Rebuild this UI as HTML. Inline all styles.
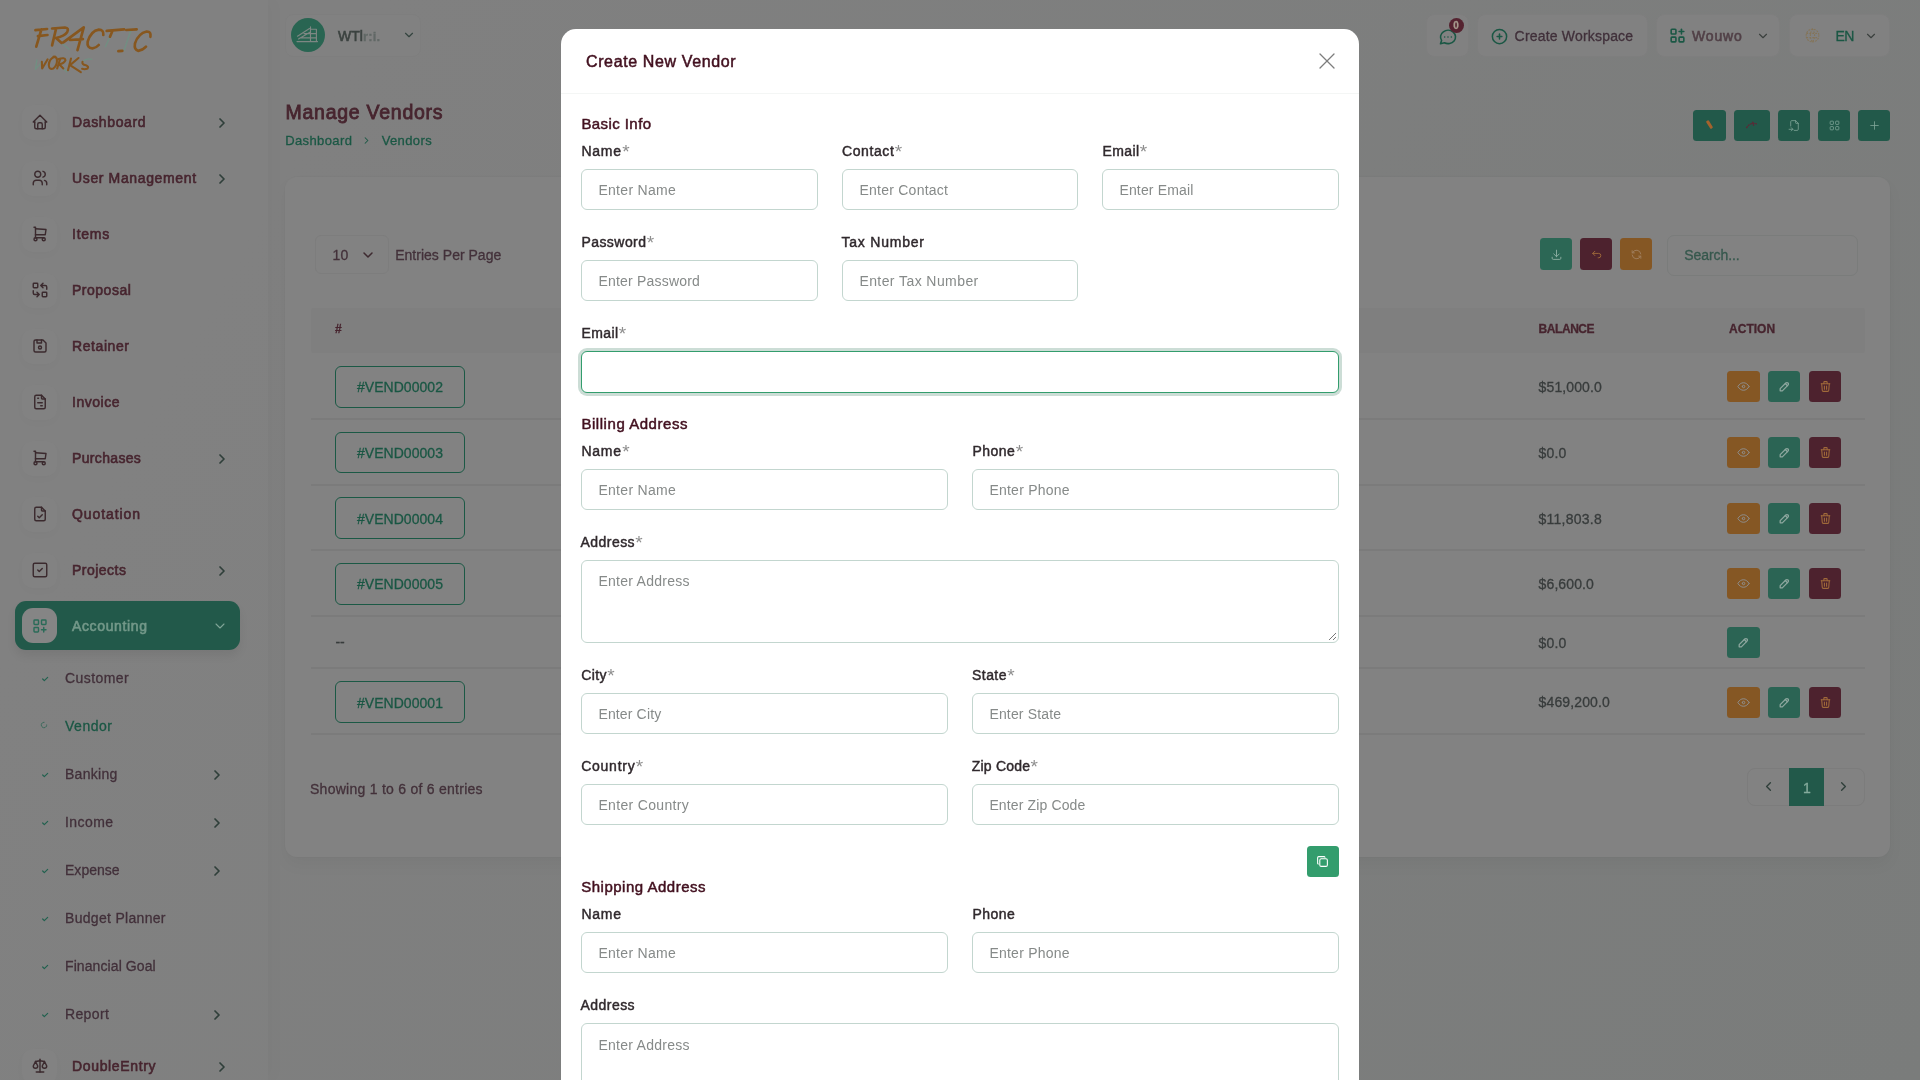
<!DOCTYPE html>
<html lang="en"><head><meta charset="utf-8"><title>Manage Vendors</title>
<style>
*{box-sizing:border-box;margin:0;padding:0}
html,body{width:1920px;height:1080px;overflow:hidden}
body{background:linear-gradient(120deg,#808080 0%,#808080 15%,#7a7c7b 100%);font-family:"Liberation Sans", sans-serif;position:relative}
#page,#modal{position:absolute;left:0;top:0;width:1920px;height:1080px;overflow:hidden;will-change:transform}
.t{position:absolute;white-space:pre;line-height:1;display:block}
.b{position:absolute}
.ic{position:absolute;display:block;overflow:visible}
.lab{position:absolute;white-space:pre;line-height:1;font-size:14px;display:block}
.tl{display:inline}
.star{position:absolute;left:100%;top:-2.1px;font-size:19px;line-height:1;margin-left:.3px}
</style></head>
<body>
<div id="page">
<div class="b" style="left:0px;top:0px;width:268px;height:1080px;background:rgba(255,255,255,.012);box-shadow:6px 0 14px rgba(0,0,0,.018);"></div>
<svg class="ic" style="left:20px;top:10px" width="160" height="80" viewBox="0 0 1920 960" fill="none" stroke="#87571f" stroke-linecap="round" stroke-linejoin="round"><g stroke-width="16" stroke="#6c9482" opacity=".75"><path d="M500 395 L590 470"/><path d="M1080 320 L1025 440"/><path d="M1330 246 L1250 482"/><path d="M202 600 L186 712 L262 622"/><path d="M520 702 L560 742"/><path d="M860 592 Q800 572 750 622"/></g><g stroke-width="32"><path d="M185 242 L325 228 M257 232 L195 440 M215 314 L330 300"/><path d="M432 228 L385 425 M385 222 L540 210 Q592 216 566 266 Q540 312 432 336 L500 395"/><path d="M520 388 L765 208 L690 482 M600 360 L755 350"/><path d="M1000 300 Q1006 236 946 236 Q852 250 812 380 Q800 456 870 460 Q915 455 945 420"/><path d="M1040 250 L1250 232 M1110 250 L1080 320"/><path d="M1275 240 L1400 232 M1180 494 L1228 490"/><path d="M1565 322 Q1576 256 1520 258 Q1420 280 1380 400 Q1366 480 1420 490 Q1470 485 1512 440"/></g><g stroke-width="25"><path d="M262 622 L266 702 L332 592"/><path d="M420 560 Q350 580 345 660 Q350 722 400 702 Q452 660 442 592 Q436 556 400 560"/><path d="M482 586 L446 702 M456 592 Q540 560 546 602 Q530 642 470 652 L520 702"/><path d="M612 582 L576 722 M702 576 L600 662 L730 746"/><path d="M750 622 Q740 652 790 662 Q832 682 810 702 Q780 716 745 706"/></g></svg>
<div class="b" style="left:22px;top:104.5px;width:35px;height:35px;background:#828282;border-radius:11px;box-shadow:0 3px 8px rgba(0,0,0,.02);"></div>
<svg class="ic" style="left:31px;top:113px;" width="18" height="18" viewBox="0 0 24 24" fill="none" stroke="#3b2a2e" stroke-width="1.9" stroke-linecap="round" stroke-linejoin="round"><path d="M5 12l-2 0l9 -9l9 9l-2 0"/><path d="M5 12v7a2 2 0 0 0 2 2h10a2 2 0 0 0 2 -2v-7"/><path d="M9 21v-6a2 2 0 0 1 2 -2h2a2 2 0 0 1 2 2v6"/></svg>
<span class="t sb" style="left:72.00px;top:115.15px;font-size:14px;font-weight:400;color:#47252f;-webkit-text-stroke:0.60px #47252f;letter-spacing:0.637px;">Dashboard</span>
<svg class="ic" style="left:214px;top:114.5px;" width="16" height="16" viewBox="0 0 24 24" fill="none" stroke="#2f3f3a" stroke-width="2.6" stroke-linecap="round" stroke-linejoin="round"><path d="M9 6l6 6l-6 6"/></svg>
<div class="b" style="left:22px;top:160.5px;width:35px;height:35px;background:#828282;border-radius:11px;box-shadow:0 3px 8px rgba(0,0,0,.02);"></div>
<svg class="ic" style="left:31px;top:169px;" width="18" height="18" viewBox="0 0 24 24" fill="none" stroke="#3b2a2e" stroke-width="1.9" stroke-linecap="round" stroke-linejoin="round"><path d="M9 7m-4 0a4 4 0 1 0 8 0a4 4 0 1 0 -8 0"/><path d="M3 21v-2a4 4 0 0 1 4 -4h4a4 4 0 0 1 4 4v2"/><path d="M16 3.13a4 4 0 0 1 0 7.75"/><path d="M21 21v-2a4 4 0 0 0 -3 -3.85"/></svg>
<span class="t sb" style="left:72.00px;top:171.15px;font-size:14px;font-weight:400;color:#47252f;-webkit-text-stroke:0.60px #47252f;letter-spacing:0.634px;">User Management</span>
<svg class="ic" style="left:214px;top:170.5px;" width="16" height="16" viewBox="0 0 24 24" fill="none" stroke="#2f3f3a" stroke-width="2.6" stroke-linecap="round" stroke-linejoin="round"><path d="M9 6l6 6l-6 6"/></svg>
<div class="b" style="left:22px;top:216.5px;width:35px;height:35px;background:#828282;border-radius:11px;box-shadow:0 3px 8px rgba(0,0,0,.02);"></div>
<svg class="ic" style="left:31px;top:225px;" width="18" height="18" viewBox="0 0 24 24" fill="none" stroke="#3b2a2e" stroke-width="1.9" stroke-linecap="round" stroke-linejoin="round"><path d="M6 19m-2 0a2 2 0 1 0 4 0a2 2 0 1 0 -4 0"/><path d="M17 19m-2 0a2 2 0 1 0 4 0a2 2 0 1 0 -4 0"/><path d="M17 17h-11v-14h-2"/><path d="M6 5l14 1l-1 7h-13"/></svg>
<span class="t sb" style="left:72.00px;top:227.15px;font-size:14px;font-weight:400;color:#47252f;-webkit-text-stroke:0.60px #47252f;letter-spacing:0.766px;">Items</span>
<div class="b" style="left:22px;top:272.5px;width:35px;height:35px;background:#828282;border-radius:11px;box-shadow:0 3px 8px rgba(0,0,0,.02);"></div>
<svg class="ic" style="left:31px;top:281px;" width="18" height="18" viewBox="0 0 24 24" fill="none" stroke="#3b2a2e" stroke-width="1.9" stroke-linecap="round" stroke-linejoin="round"><path d="M3 3m0 1a1 1 0 0 1 1 -1h4a1 1 0 0 1 1 1v4a1 1 0 0 1 -1 1h-4a1 1 0 0 1 -1 -1z"/><path d="M15 15m0 1a1 1 0 0 1 1 -1h4a1 1 0 0 1 1 1v4a1 1 0 0 1 -1 1h-4a1 1 0 0 1 -1 -1z"/><path d="M21 11v-3a2 2 0 0 0 -2 -2h-6l3 3m0 -6l-3 3"/><path d="M3 13v3a2 2 0 0 0 2 2h6l-3 -3m0 6l3 -3"/></svg>
<span class="t sb" style="left:72.00px;top:283.15px;font-size:14px;font-weight:400;color:#47252f;-webkit-text-stroke:0.60px #47252f;letter-spacing:0.504px;">Proposal</span>
<div class="b" style="left:22px;top:328.5px;width:35px;height:35px;background:#828282;border-radius:11px;box-shadow:0 3px 8px rgba(0,0,0,.02);"></div>
<svg class="ic" style="left:31px;top:337px;" width="18" height="18" viewBox="0 0 24 24" fill="none" stroke="#3b2a2e" stroke-width="1.9" stroke-linecap="round" stroke-linejoin="round"><path d="M6 4h10l4 4v10a2 2 0 0 1 -2 2h-12a2 2 0 0 1 -2 -2v-12a2 2 0 0 1 2 -2"/><path d="M12 14m-2 0a2 2 0 1 0 4 0a2 2 0 1 0 -4 0"/><path d="M14 4l0 4l-6 0l0 -4"/></svg>
<span class="t sb" style="left:72.00px;top:339.15px;font-size:14px;font-weight:400;color:#47252f;-webkit-text-stroke:0.60px #47252f;letter-spacing:0.582px;">Retainer</span>
<div class="b" style="left:22px;top:384.5px;width:35px;height:35px;background:#828282;border-radius:11px;box-shadow:0 3px 8px rgba(0,0,0,.02);"></div>
<svg class="ic" style="left:31px;top:393px;" width="18" height="18" viewBox="0 0 24 24" fill="none" stroke="#3b2a2e" stroke-width="1.9" stroke-linecap="round" stroke-linejoin="round"><path d="M14 3v4a1 1 0 0 0 1 1h4"/><path d="M17 21h-10a2 2 0 0 1 -2 -2v-14a2 2 0 0 1 2 -2h7l5 5v11a2 2 0 0 1 -2 2z"/><path d="M9 7l1 0"/><path d="M9 13l6 0"/><path d="M13 17l2 0"/></svg>
<span class="t sb" style="left:72.00px;top:395.15px;font-size:14px;font-weight:400;color:#47252f;-webkit-text-stroke:0.60px #47252f;letter-spacing:0.538px;">Invoice</span>
<div class="b" style="left:22px;top:440.5px;width:35px;height:35px;background:#828282;border-radius:11px;box-shadow:0 3px 8px rgba(0,0,0,.02);"></div>
<svg class="ic" style="left:31px;top:449px;" width="18" height="18" viewBox="0 0 24 24" fill="none" stroke="#3b2a2e" stroke-width="1.9" stroke-linecap="round" stroke-linejoin="round"><path d="M6 19m-2 0a2 2 0 1 0 4 0a2 2 0 1 0 -4 0"/><path d="M17 19m-2 0a2 2 0 1 0 4 0a2 2 0 1 0 -4 0"/><path d="M17 17h-11v-14h-2"/><path d="M6 5l14 1l-1 7h-13"/></svg>
<span class="t sb" style="left:72.00px;top:451.15px;font-size:14px;font-weight:400;color:#47252f;-webkit-text-stroke:0.60px #47252f;letter-spacing:0.340px;">Purchases</span>
<svg class="ic" style="left:214px;top:450.5px;" width="16" height="16" viewBox="0 0 24 24" fill="none" stroke="#2f3f3a" stroke-width="2.6" stroke-linecap="round" stroke-linejoin="round"><path d="M9 6l6 6l-6 6"/></svg>
<div class="b" style="left:22px;top:496.5px;width:35px;height:35px;background:#828282;border-radius:11px;box-shadow:0 3px 8px rgba(0,0,0,.02);"></div>
<svg class="ic" style="left:31px;top:505px;" width="18" height="18" viewBox="0 0 24 24" fill="none" stroke="#3b2a2e" stroke-width="1.9" stroke-linecap="round" stroke-linejoin="round"><path d="M14 3v4a1 1 0 0 0 1 1h4"/><path d="M17 21h-10a2 2 0 0 1 -2 -2v-14a2 2 0 0 1 2 -2h7l5 5v11a2 2 0 0 1 -2 2z"/><path d="M9 15l2 2l4 -4"/></svg>
<span class="t sb" style="left:72.00px;top:507.15px;font-size:14px;font-weight:400;color:#47252f;-webkit-text-stroke:0.60px #47252f;letter-spacing:0.920px;">Quotation</span>
<div class="b" style="left:22px;top:552.5px;width:35px;height:35px;background:#828282;border-radius:11px;box-shadow:0 3px 8px rgba(0,0,0,.02);"></div>
<svg class="ic" style="left:31px;top:561px;" width="18" height="18" viewBox="0 0 24 24" fill="none" stroke="#3b2a2e" stroke-width="1.9" stroke-linecap="round" stroke-linejoin="round"><path d="M3 3m0 2a2 2 0 0 1 2 -2h14a2 2 0 0 1 2 2v14a2 2 0 0 1 -2 2h-14a2 2 0 0 1 -2 -2z"/><path d="M9 12l2 2l4 -4"/></svg>
<span class="t sb" style="left:72.00px;top:563.15px;font-size:14px;font-weight:400;color:#47252f;-webkit-text-stroke:0.60px #47252f;letter-spacing:0.486px;">Projects</span>
<svg class="ic" style="left:214px;top:562.5px;" width="16" height="16" viewBox="0 0 24 24" fill="none" stroke="#2f3f3a" stroke-width="2.6" stroke-linecap="round" stroke-linejoin="round"><path d="M9 6l6 6l-6 6"/></svg>
<div class="b" style="left:15px;top:601px;width:225px;height:49px;background:#22594a;border-radius:11px;box-shadow:0 6px 10px rgba(0,0,0,.07);"></div>
<div class="b" style="left:22px;top:608px;width:35px;height:35px;background:#858585;border-radius:11px;"></div>
<svg class="ic" style="left:31px;top:617px;" width="18" height="18" viewBox="0 0 24 24" fill="none" stroke="#2a6b58" stroke-width="1.9" stroke-linecap="round" stroke-linejoin="round"><path d="M4 4m0 1a1 1 0 0 1 1 -1h4a1 1 0 0 1 1 1v4a1 1 0 0 1 -1 1h-4a1 1 0 0 1 -1 -1z"/><path d="M14 4m0 1a1 1 0 0 1 1 -1h4a1 1 0 0 1 1 1v4a1 1 0 0 1 -1 1h-4a1 1 0 0 1 -1 -1z"/><path d="M4 14m0 1a1 1 0 0 1 1 -1h4a1 1 0 0 1 1 1v4a1 1 0 0 1 -1 1h-4a1 1 0 0 1 -1 -1z"/><path d="M14 17h6m-3 -3v6"/></svg>
<span class="t sb" style="left:72.00px;top:619.15px;font-size:14px;font-weight:400;color:#739889;-webkit-text-stroke:0.60px #739889;letter-spacing:0.631px;">Accounting</span>
<svg class="ic" style="left:212px;top:618px;" width="16" height="16" viewBox="0 0 24 24" fill="none" stroke="#7fa597" stroke-width="1.6" stroke-linecap="round" stroke-linejoin="round"><path d="M6 9l6 6l6 -6"/></svg>
<svg class="ic" style="left:40.5px;top:674.5px;" width="8" height="8" viewBox="0 0 24 24" fill="none" stroke="#22614f" stroke-width="3.6" stroke-linecap="round" stroke-linejoin="round"><path d="M5 12l5 5l10 -10"/></svg>
<span class="t sub" style="left:65.00px;top:671.15px;font-size:14px;font-weight:400;color:#42303a;-webkit-text-stroke:0.3px #42303a;letter-spacing:0.420px;">Customer</span>
<svg class="ic" style="left:40px;top:721px;" width="8" height="8" viewBox="0 0 24 24" fill="none" stroke="#2a6452" stroke-width="3" stroke-linecap="round" stroke-linejoin="round"><path d="M12 4a8 8 0 1 0 8 8" stroke-dasharray="3 3"/></svg>
<span class="t sub" style="left:65.00px;top:719.15px;font-size:14px;font-weight:400;color:#1a5744;-webkit-text-stroke:0.3px #1a5744;letter-spacing:0.523px;">Vendor</span>
<svg class="ic" style="left:40.5px;top:770.5px;" width="8" height="8" viewBox="0 0 24 24" fill="none" stroke="#22614f" stroke-width="3.6" stroke-linecap="round" stroke-linejoin="round"><path d="M5 12l5 5l10 -10"/></svg>
<span class="t sub" style="left:65.00px;top:767.15px;font-size:14px;font-weight:400;color:#42303a;-webkit-text-stroke:0.3px #42303a;letter-spacing:0.272px;">Banking</span>
<svg class="ic" style="left:209px;top:767px;" width="16" height="16" viewBox="0 0 24 24" fill="none" stroke="#2f3f3a" stroke-width="2.6" stroke-linecap="round" stroke-linejoin="round"><path d="M9 6l6 6l-6 6"/></svg>
<svg class="ic" style="left:40.5px;top:818.5px;" width="8" height="8" viewBox="0 0 24 24" fill="none" stroke="#22614f" stroke-width="3.6" stroke-linecap="round" stroke-linejoin="round"><path d="M5 12l5 5l10 -10"/></svg>
<span class="t sub" style="left:65.00px;top:815.15px;font-size:14px;font-weight:400;color:#42303a;-webkit-text-stroke:0.3px #42303a;letter-spacing:0.422px;">Income</span>
<svg class="ic" style="left:209px;top:815px;" width="16" height="16" viewBox="0 0 24 24" fill="none" stroke="#2f3f3a" stroke-width="2.6" stroke-linecap="round" stroke-linejoin="round"><path d="M9 6l6 6l-6 6"/></svg>
<svg class="ic" style="left:40.5px;top:866.5px;" width="8" height="8" viewBox="0 0 24 24" fill="none" stroke="#22614f" stroke-width="3.6" stroke-linecap="round" stroke-linejoin="round"><path d="M5 12l5 5l10 -10"/></svg>
<span class="t sub" style="left:65.00px;top:863.15px;font-size:14px;font-weight:400;color:#42303a;-webkit-text-stroke:0.3px #42303a;letter-spacing:0.025px;">Expense</span>
<svg class="ic" style="left:209px;top:863px;" width="16" height="16" viewBox="0 0 24 24" fill="none" stroke="#2f3f3a" stroke-width="2.6" stroke-linecap="round" stroke-linejoin="round"><path d="M9 6l6 6l-6 6"/></svg>
<svg class="ic" style="left:40.5px;top:914.5px;" width="8" height="8" viewBox="0 0 24 24" fill="none" stroke="#22614f" stroke-width="3.6" stroke-linecap="round" stroke-linejoin="round"><path d="M5 12l5 5l10 -10"/></svg>
<span class="t sub" style="left:65.00px;top:911.15px;font-size:14px;font-weight:400;color:#42303a;-webkit-text-stroke:0.3px #42303a;letter-spacing:0.304px;">Budget Planner</span>
<svg class="ic" style="left:40.5px;top:962.5px;" width="8" height="8" viewBox="0 0 24 24" fill="none" stroke="#22614f" stroke-width="3.6" stroke-linecap="round" stroke-linejoin="round"><path d="M5 12l5 5l10 -10"/></svg>
<span class="t sub" style="left:65.00px;top:959.15px;font-size:14px;font-weight:400;color:#42303a;-webkit-text-stroke:0.3px #42303a;letter-spacing:0.095px;">Financial Goal</span>
<svg class="ic" style="left:40.5px;top:1010.5px;" width="8" height="8" viewBox="0 0 24 24" fill="none" stroke="#22614f" stroke-width="3.6" stroke-linecap="round" stroke-linejoin="round"><path d="M5 12l5 5l10 -10"/></svg>
<span class="t sub" style="left:65.00px;top:1007.15px;font-size:14px;font-weight:400;color:#42303a;-webkit-text-stroke:0.3px #42303a;letter-spacing:0.362px;">Report</span>
<svg class="ic" style="left:209px;top:1007px;" width="16" height="16" viewBox="0 0 24 24" fill="none" stroke="#2f3f3a" stroke-width="2.6" stroke-linecap="round" stroke-linejoin="round"><path d="M9 6l6 6l-6 6"/></svg>
<div class="b" style="left:22px;top:1048.5px;width:35px;height:35px;background:#828282;border-radius:11px;box-shadow:0 3px 8px rgba(0,0,0,.02);"></div>
<svg class="ic" style="left:31px;top:1057px;" width="18" height="18" viewBox="0 0 24 24" fill="none" stroke="#3b2a2e" stroke-width="1.9" stroke-linecap="round" stroke-linejoin="round"><path d="M7 20l10 0"/><path d="M6 6l6 -1l6 1"/><path d="M12 3l0 17"/><path d="M9 12l-3 -6l-3 6a3 3 0 0 0 6 0"/><path d="M21 12l-3 -6l-3 6a3 3 0 0 0 6 0"/></svg>
<span class="t sb" style="left:72.00px;top:1059.15px;font-size:14px;font-weight:400;color:#47252f;-webkit-text-stroke:0.60px #47252f;letter-spacing:0.648px;">DoubleEntry</span>
<svg class="ic" style="left:214px;top:1058.5px;" width="16" height="16" viewBox="0 0 24 24" fill="none" stroke="#2f3f3a" stroke-width="2.6" stroke-linecap="round" stroke-linejoin="round"><path d="M9 6l6 6l-6 6"/></svg>
<div class="b" style="left:285px;top:14px;width:136px;height:43px;border:1px solid #7e7e7e;border-radius:8px;background:#818181;"></div>
<div class="b" style="left:291px;top:18px;width:34px;height:34px;background:#296552;border-radius:50%;"></div>
<svg class="ic" style="left:291px;top:18px" width="34" height="34" viewBox="291 18 34 34" fill="none" stroke="#7d8783" stroke-width="1.15" stroke-linecap="round" stroke-linejoin="round"><path d="M297.5 36.2L309.5 28.6M298.5 39L309.5 32.4M310.5 26.8V41M310.5 29.2H316.4V41M304 33.6H316M300 37.8H316M297 41.6H317.5"/></svg>
<span class="t sb" style="left:338.00px;top:29.15px;font-size:14px;font-weight:400;color:#3c4340;-webkit-text-stroke:0.60px #3c4340;letter-spacing:0.052px;">WTl</span>
<span class="t " style="left:363.00px;top:30.00px;font-size:13px;font-weight:700;color:#3c4b46;-webkit-text-stroke:0.3px #3c4b46;letter-spacing:0.168px;opacity:.45;">r:i.</span>
<svg class="ic" style="left:402px;top:28.4px;" width="14" height="14" viewBox="0 0 24 24" fill="none" stroke="#34443f" stroke-width="2.0" stroke-linecap="round" stroke-linejoin="round"><path d="M6 9l6 6l6 -6"/></svg>
<div class="b" style="left:1426px;top:14px;width:43px;height:43px;border:1px solid #7e7e7e;border-radius:8px;background:#818181;"></div>
<svg class="ic" style="left:1437.5px;top:26.5px;" width="20" height="20" viewBox="0 0 24 24" fill="none" stroke="#1a5744" stroke-width="1.9" stroke-linecap="round" stroke-linejoin="round"><path d="M3 20l1.3 -3.9c-2.324 -3.437 -1.426 -7.872 2.1 -10.374c3.526 -2.501 8.59 -2.296 11.845 .48c3.255 2.777 3.695 7.266 1.029 10.501c-2.666 3.235 -7.615 4.215 -11.574 2.293l-4.7 1"/><path d="M12 12l0 .01"/><path d="M8 12l0 .01"/><path d="M16 12l0 .01"/></svg>
<div class="b" style="left:1449px;top:17.5px;width:15px;height:15px;background:#552330;border-radius:50%;"></div>
<span class="t " style="left:1453.20px;top:21.14px;font-size:10px;font-weight:700;color:#a79a8c;-webkit-text-stroke:0.3px #a79a8c;letter-spacing:0.156px;">0</span>
<div class="b" style="left:1477px;top:14px;width:171px;height:43px;border:1px solid #7e7e7e;border-radius:8px;background:#818181;"></div>
<svg class="ic" style="left:1490px;top:26.5px;" width="19" height="19" viewBox="0 0 24 24" fill="none" stroke="#1a5744" stroke-width="1.9" stroke-linecap="round" stroke-linejoin="round"><path d="M3 12a9 9 0 1 0 18 0a9 9 0 0 0 -18 0"/><path d="M9 12h6"/><path d="M12 9v6"/></svg>
<span class="t " style="left:1514.60px;top:29.15px;font-size:14px;font-weight:400;color:#40303a;-webkit-text-stroke:0.3px #40303a;letter-spacing:0.188px;">Create Workspace</span>
<div class="b" style="left:1656px;top:14px;width:124px;height:43px;border:1px solid #7e7e7e;border-radius:8px;background:#818181;"></div>
<svg class="ic" style="left:1667.5px;top:26px;" width="19" height="19" viewBox="0 0 24 24" fill="none" stroke="#1a5744" stroke-width="2.0" stroke-linecap="round" stroke-linejoin="round"><path d="M4 4m0 1a1 1 0 0 1 1 -1h4a1 1 0 0 1 1 1v4a1 1 0 0 1 -1 1h-4a1 1 0 0 1 -1 -1z"/><path d="M4 14m0 1a1 1 0 0 1 1 -1h4a1 1 0 0 1 1 1v4a1 1 0 0 1 -1 1h-4a1 1 0 0 1 -1 -1z"/><path d="M14 14m0 1a1 1 0 0 1 1 -1h4a1 1 0 0 1 1 1v4a1 1 0 0 1 -1 1h-4a1 1 0 0 1 -1 -1z"/><path d="M14 7l6 0"/><path d="M17 4l0 6"/></svg>
<span class="t sb" style="left:1692.00px;top:29.15px;font-size:14px;font-weight:400;color:#514047;-webkit-text-stroke:0.60px #514047;letter-spacing:0.841px;">Wouwo</span>
<svg class="ic" style="left:1756px;top:28.5px;" width="14" height="14" viewBox="0 0 24 24" fill="none" stroke="#3a3f3d" stroke-width="1.9" stroke-linecap="round" stroke-linejoin="round"><path d="M6 9l6 6l6 -6"/></svg>
<div class="b" style="left:1789px;top:14px;width:101px;height:43px;border:1px solid #7e7e7e;border-radius:8px;background:#818181;"></div>
<svg class="ic" style="left:1803.5px;top:27px;opacity:.75;" width="17" height="17" viewBox="0 0 24 24" fill="none" stroke="#86704a" stroke-width="1.5" stroke-linecap="round" stroke-linejoin="round"><circle cx="12" cy="12" r="9" stroke-dasharray="1.4 2.6"/><path d="M4 9h16M4 15h16M12 3c-4 5-4 13 0 18M12 3c4 5 4 13 0 18" stroke-dasharray="1.2 3"/></svg>
<span class="t " style="left:1835.50px;top:29.15px;font-size:14px;font-weight:400;color:#1a5744;-webkit-text-stroke:0.3px #1a5744;letter-spacing:-0.562px;">EN</span>
<svg class="ic" style="left:1864px;top:28.5px;" width="14" height="14" viewBox="0 0 24 24" fill="none" stroke="#3a3f3d" stroke-width="1.9" stroke-linecap="round" stroke-linejoin="round"><path d="M6 9l6 6l6 -6"/></svg>
<span class="t sb" style="left:285.50px;top:103.09px;font-size:19.5px;font-weight:400;color:#47252f;-webkit-text-stroke:0.84px #47252f;letter-spacing:0.740px;">Manage Vendors</span>
<span class="t " style="left:285.20px;top:133.80px;font-size:13px;font-weight:400;color:#1a5744;-webkit-text-stroke:0.3px #1a5744;letter-spacing:0.387px;">Dashboard</span>
<svg class="ic" style="left:361px;top:134.5px;" width="11" height="11" viewBox="0 0 24 24" fill="none" stroke="#1a5744" stroke-width="2.2" stroke-linecap="round" stroke-linejoin="round"><path d="M9 6l6 6l-6 6"/></svg>
<span class="t " style="left:381.70px;top:133.80px;font-size:13px;font-weight:400;color:#1a5744;-webkit-text-stroke:0.3px #1a5744;letter-spacing:0.373px;">Vendors</span>
<div class="b" style="left:1693px;top:110px;width:33px;height:31px;background:#22594a;border-radius:3.5px;"></div>
<div class="b" style="left:1734px;top:110px;width:36px;height:31px;background:#22594a;border-radius:3.5px;"></div>
<div class="b" style="left:1778px;top:110px;width:32px;height:31px;background:#22594a;border-radius:3.5px;"></div>
<svg class="ic" style="left:1787.5px;top:119px;" width="13" height="13" viewBox="0 0 24 24" fill="none" stroke="#7fa597" stroke-width="1.5" stroke-linecap="round" stroke-linejoin="round"><path d="M14 3v4a1 1 0 0 0 1 1h4"/><path d="M5 13v-8a2 2 0 0 1 2 -2h7l5 5v11a2 2 0 0 1 -2 2h-5.5m-9.5 -2h7m-3 -3l3 3l-3 3"/></svg>
<div class="b" style="left:1818px;top:110px;width:32px;height:31px;background:#22594a;border-radius:3.5px;"></div>
<svg class="ic" style="left:1827.5px;top:119px;" width="13" height="13" viewBox="0 0 24 24" fill="none" stroke="#7fa597" stroke-width="1.5" stroke-linecap="round" stroke-linejoin="round"><path d="M4 4m0 1a1 1 0 0 1 1 -1h4a1 1 0 0 1 1 1v4a1 1 0 0 1 -1 1h-4a1 1 0 0 1 -1 -1z"/><path d="M14 4m0 1a1 1 0 0 1 1 -1h4a1 1 0 0 1 1 1v4a1 1 0 0 1 -1 1h-4a1 1 0 0 1 -1 -1z"/><path d="M4 14m0 1a1 1 0 0 1 1 -1h4a1 1 0 0 1 1 1v4a1 1 0 0 1 -1 1h-4a1 1 0 0 1 -1 -1z"/><path d="M14 14m0 1a1 1 0 0 1 1 -1h4a1 1 0 0 1 1 1v4a1 1 0 0 1 -1 1h-4a1 1 0 0 1 -1 -1z"/></svg>
<div class="b" style="left:1858px;top:110px;width:32px;height:31px;background:#22594a;border-radius:3.5px;"></div>
<svg class="ic" style="left:1867.5px;top:119px;" width="13" height="13" viewBox="0 0 24 24" fill="none" stroke="#7fa597" stroke-width="1.5" stroke-linecap="round" stroke-linejoin="round"><path d="M12 5l0 14"/><path d="M5 12l14 0"/></svg>
<div class="b" style="left:1708px;top:120px;width:3.2px;height:9px;background:#a5622c;transform:rotate(-32deg);border-radius:1px;"></div>
<svg class="ic" style="left:1745px;top:119px;" width="13" height="13" viewBox="0 0 24 24" fill="none" stroke="#5a2a37" stroke-width="2.4" stroke-linecap="round" stroke-linejoin="round"><path d="M3 16c5 -7 11 -10 18 -7" stroke-dasharray="2 3"/><path d="M14 6l2 6" stroke-dasharray="2 2"/></svg>
<div class="b" style="left:285px;top:177px;width:1605px;height:680px;background:#828282;border-radius:12px;box-shadow:0 0 0 1px rgba(0,0,0,.018),0 8px 16px rgba(0,20,10,.04);"></div>
<div class="b" style="left:315px;top:235px;width:74px;height:39px;border:1px solid #7d7d7d;border-radius:6px;background:#828282;"></div>
<span class="t " style="left:332.60px;top:248.15px;font-size:14px;font-weight:400;color:#43313a;-webkit-text-stroke:0.3px #43313a;letter-spacing:0.219px;">10</span>
<svg class="ic" style="left:360px;top:247px;" width="16" height="16" viewBox="0 0 24 24" fill="none" stroke="#3e2a30" stroke-width="2.3" stroke-linecap="round" stroke-linejoin="round"><path d="M6 9l6 6l6 -6"/></svg>
<span class="t " style="left:395.20px;top:248.15px;font-size:14px;font-weight:400;color:#43313a;-webkit-text-stroke:0.3px #43313a;letter-spacing:0.016px;">Entries Per Page</span>
<div class="b" style="left:1540px;top:238px;width:32px;height:32px;background:#2c6755;border-radius:3.5px;"></div>
<svg class="ic" style="left:1549.5px;top:247.5px;" width="13" height="13" viewBox="0 0 24 24" fill="none" stroke="#8fb0a4" stroke-width="1.7" stroke-linecap="round" stroke-linejoin="round"><path d="M4 17v2a2 2 0 0 0 2 2h12a2 2 0 0 0 2 -2v-2"/><path d="M7 11l5 5l5 -5"/><path d="M12 4l0 12"/></svg>
<div class="b" style="left:1580px;top:238px;width:32px;height:32px;background:#4d222e;border-radius:3.5px;"></div>
<svg class="ic" style="left:1589.5px;top:247.5px;" width="13" height="13" viewBox="0 0 24 24" fill="none" stroke="#a06a3a" stroke-width="1.7" stroke-linecap="round" stroke-linejoin="round"><path d="M9 14l-4 -4l4 -4"/><path d="M5 10h11a4 4 0 1 1 0 8h-1"/></svg>
<div class="b" style="left:1620px;top:238px;width:32px;height:32px;background:#855724;border-radius:3.5px;"></div>
<svg class="ic" style="left:1629.5px;top:247.5px;" width="13" height="13" viewBox="0 0 24 24" fill="none" stroke="#a0805f" stroke-width="1.7" stroke-linecap="round" stroke-linejoin="round"><path d="M20 11a8.1 8.1 0 0 0 -15.500 -2m-.5 -4v4h4"/><path d="M4 13a8.1 8.1 0 0 0 15.500 2m.5 4v-4h-4"/></svg>
<div class="b" style="left:1667px;top:234.5px;width:191px;height:41px;border:1px solid #7a7c7b;border-radius:7px;background:#828282;"></div>
<span class="t " style="left:1684.30px;top:248.15px;font-size:14px;font-weight:400;color:#36584d;-webkit-text-stroke:0.3px #36584d;letter-spacing:-0.073px;">Search...</span>
<div class="b" style="left:311px;top:308px;width:1554px;height:45px;background:#7f7f7f;border-radius:3px;"></div>
<span class="t " style="left:335.00px;top:322.84px;font-size:12px;font-weight:700;color:#47252f;-webkit-text-stroke:0.3px #47252f;letter-spacing:1.078px;">#</span>
<span class="t " style="left:1538.60px;top:322.84px;font-size:12px;font-weight:700;color:#47252f;-webkit-text-stroke:0.3px #47252f;letter-spacing:-0.449px;">BALANCE</span>
<span class="t " style="left:1729.00px;top:322.84px;font-size:12px;font-weight:700;color:#47252f;-webkit-text-stroke:0.3px #47252f;letter-spacing:0.026px;">ACTION</span>
<div class="b" style="left:311px;top:418.4px;width:1554px;height:1.3px;background:#7b7b7b;"></div>
<div class="b" style="left:335px;top:366.0px;width:130px;height:41.6px;border:1px solid #1b5945;border-radius:6px;"></div>
<span class="t " style="left:400.00px;top:380.45px;font-size:14px;font-weight:400;color:#1a5744;-webkit-text-stroke:0.3px #1a5744;letter-spacing:0.028px;transform:translateX(-50%);">#VEND00002</span>
<div class="b" style="left:1727px;top:371.3px;width:33px;height:31px;background:#855724;border-radius:3.5px;"></div>
<svg class="ic" style="left:1736px;top:379.3px;" width="15" height="15" viewBox="0 0 24 24" fill="none" stroke="#8f8f8f" stroke-width="1.5" stroke-linecap="round" stroke-linejoin="round"><path d="M10 12a2 2 0 1 0 4 0a2 2 0 0 0 -4 0"/><path d="M21 12c-2.4 4 -5.4 6 -9 6c-3.6 0 -6.6 -2 -9 -6c2.4 -4 5.4 -6 9 -6c3.6 0 6.6 2 9 6"/></svg>
<div class="b" style="left:1768px;top:371.3px;width:32px;height:31px;background:#2b6454;border-radius:3.5px;"></div>
<svg class="ic" style="left:1777.5px;top:380.3px;" width="13" height="13" viewBox="0 0 24 24" fill="none" stroke="#8fa8a0" stroke-width="2.3" stroke-linecap="round" stroke-linejoin="round"><path d="M4 20h4l10.5 -10.5a2.828 2.828 0 1 0 -4 -4l-10.5 10.5v4"/><path d="M13.5 6.5l4 4"/></svg>
<div class="b" style="left:1809px;top:371.3px;width:32px;height:31px;background:#4d222e;border-radius:3.5px;"></div>
<svg class="ic" style="left:1818.5px;top:380.3px;" width="13" height="13" viewBox="0 0 24 24" fill="none" stroke="#a06a3a" stroke-width="2.0" stroke-linecap="round" stroke-linejoin="round"><path d="M4 7l16 0"/><path d="M10 11l0 6"/><path d="M14 11l0 6"/><path d="M5 7l1 12a2 2 0 0 0 2 2h8a2 2 0 0 0 2 -2l1 -12"/><path d="M9 7v-3a1 1 0 0 1 1 -1h4a1 1 0 0 1 1 1v3"/></svg>
<span class="t " style="left:1538.60px;top:380.25px;font-size:14px;font-weight:400;color:#383c3c;-webkit-text-stroke:0.3px #383c3c;letter-spacing:0.116px;">$51,000.0</span>
<div class="b" style="left:311px;top:484.4px;width:1554px;height:1.3px;background:#7b7b7b;"></div>
<div class="b" style="left:335px;top:431.7px;width:130px;height:41.6px;border:1px solid #1b5945;border-radius:6px;"></div>
<span class="t " style="left:400.00px;top:446.15px;font-size:14px;font-weight:400;color:#1a5744;-webkit-text-stroke:0.3px #1a5744;letter-spacing:0.028px;transform:translateX(-50%);">#VEND00003</span>
<div class="b" style="left:1727px;top:437.0px;width:33px;height:31px;background:#855724;border-radius:3.5px;"></div>
<svg class="ic" style="left:1736px;top:445.0px;" width="15" height="15" viewBox="0 0 24 24" fill="none" stroke="#8f8f8f" stroke-width="1.5" stroke-linecap="round" stroke-linejoin="round"><path d="M10 12a2 2 0 1 0 4 0a2 2 0 0 0 -4 0"/><path d="M21 12c-2.4 4 -5.4 6 -9 6c-3.6 0 -6.6 -2 -9 -6c2.4 -4 5.4 -6 9 -6c3.6 0 6.6 2 9 6"/></svg>
<div class="b" style="left:1768px;top:437.0px;width:32px;height:31px;background:#2b6454;border-radius:3.5px;"></div>
<svg class="ic" style="left:1777.5px;top:446.0px;" width="13" height="13" viewBox="0 0 24 24" fill="none" stroke="#8fa8a0" stroke-width="2.3" stroke-linecap="round" stroke-linejoin="round"><path d="M4 20h4l10.5 -10.5a2.828 2.828 0 1 0 -4 -4l-10.5 10.5v4"/><path d="M13.5 6.5l4 4"/></svg>
<div class="b" style="left:1809px;top:437.0px;width:32px;height:31px;background:#4d222e;border-radius:3.5px;"></div>
<svg class="ic" style="left:1818.5px;top:446.0px;" width="13" height="13" viewBox="0 0 24 24" fill="none" stroke="#a06a3a" stroke-width="2.0" stroke-linecap="round" stroke-linejoin="round"><path d="M4 7l16 0"/><path d="M10 11l0 6"/><path d="M14 11l0 6"/><path d="M5 7l1 12a2 2 0 0 0 2 2h8a2 2 0 0 0 2 -2l1 -12"/><path d="M9 7v-3a1 1 0 0 1 1 -1h4a1 1 0 0 1 1 1v3"/></svg>
<span class="t " style="left:1538.60px;top:445.95px;font-size:14px;font-weight:400;color:#383c3c;-webkit-text-stroke:0.3px #383c3c;letter-spacing:0.113px;">$0.0</span>
<div class="b" style="left:311px;top:549.4px;width:1554px;height:1.3px;background:#7b7b7b;"></div>
<div class="b" style="left:335px;top:497.34999999999997px;width:130px;height:41.6px;border:1px solid #1b5945;border-radius:6px;"></div>
<span class="t " style="left:400.00px;top:511.80px;font-size:14px;font-weight:400;color:#1a5744;-webkit-text-stroke:0.3px #1a5744;letter-spacing:0.028px;transform:translateX(-50%);">#VEND00004</span>
<div class="b" style="left:1727px;top:502.65px;width:33px;height:31px;background:#855724;border-radius:3.5px;"></div>
<svg class="ic" style="left:1736px;top:510.65px;" width="15" height="15" viewBox="0 0 24 24" fill="none" stroke="#8f8f8f" stroke-width="1.5" stroke-linecap="round" stroke-linejoin="round"><path d="M10 12a2 2 0 1 0 4 0a2 2 0 0 0 -4 0"/><path d="M21 12c-2.4 4 -5.4 6 -9 6c-3.6 0 -6.6 -2 -9 -6c2.4 -4 5.4 -6 9 -6c3.6 0 6.6 2 9 6"/></svg>
<div class="b" style="left:1768px;top:502.65px;width:32px;height:31px;background:#2b6454;border-radius:3.5px;"></div>
<svg class="ic" style="left:1777.5px;top:511.65px;" width="13" height="13" viewBox="0 0 24 24" fill="none" stroke="#8fa8a0" stroke-width="2.3" stroke-linecap="round" stroke-linejoin="round"><path d="M4 20h4l10.5 -10.5a2.828 2.828 0 1 0 -4 -4l-10.5 10.5v4"/><path d="M13.5 6.5l4 4"/></svg>
<div class="b" style="left:1809px;top:502.65px;width:32px;height:31px;background:#4d222e;border-radius:3.5px;"></div>
<svg class="ic" style="left:1818.5px;top:511.65px;" width="13" height="13" viewBox="0 0 24 24" fill="none" stroke="#a06a3a" stroke-width="2.0" stroke-linecap="round" stroke-linejoin="round"><path d="M4 7l16 0"/><path d="M10 11l0 6"/><path d="M14 11l0 6"/><path d="M5 7l1 12a2 2 0 0 0 2 2h8a2 2 0 0 0 2 -2l1 -12"/><path d="M9 7v-3a1 1 0 0 1 1 -1h4a1 1 0 0 1 1 1v3"/></svg>
<span class="t " style="left:1538.60px;top:511.60px;font-size:14px;font-weight:400;color:#383c3c;-webkit-text-stroke:0.3px #383c3c;letter-spacing:0.233px;">$11,803.8</span>
<div class="b" style="left:311px;top:615.4px;width:1554px;height:1.3px;background:#7b7b7b;"></div>
<div class="b" style="left:335px;top:563.0px;width:130px;height:41.6px;border:1px solid #1b5945;border-radius:6px;"></div>
<span class="t " style="left:400.00px;top:577.45px;font-size:14px;font-weight:400;color:#1a5744;-webkit-text-stroke:0.3px #1a5744;letter-spacing:0.028px;transform:translateX(-50%);">#VEND00005</span>
<div class="b" style="left:1727px;top:568.3px;width:33px;height:31px;background:#855724;border-radius:3.5px;"></div>
<svg class="ic" style="left:1736px;top:576.3px;" width="15" height="15" viewBox="0 0 24 24" fill="none" stroke="#8f8f8f" stroke-width="1.5" stroke-linecap="round" stroke-linejoin="round"><path d="M10 12a2 2 0 1 0 4 0a2 2 0 0 0 -4 0"/><path d="M21 12c-2.4 4 -5.4 6 -9 6c-3.6 0 -6.6 -2 -9 -6c2.4 -4 5.4 -6 9 -6c3.6 0 6.6 2 9 6"/></svg>
<div class="b" style="left:1768px;top:568.3px;width:32px;height:31px;background:#2b6454;border-radius:3.5px;"></div>
<svg class="ic" style="left:1777.5px;top:577.3px;" width="13" height="13" viewBox="0 0 24 24" fill="none" stroke="#8fa8a0" stroke-width="2.3" stroke-linecap="round" stroke-linejoin="round"><path d="M4 20h4l10.5 -10.5a2.828 2.828 0 1 0 -4 -4l-10.5 10.5v4"/><path d="M13.5 6.5l4 4"/></svg>
<div class="b" style="left:1809px;top:568.3px;width:32px;height:31px;background:#4d222e;border-radius:3.5px;"></div>
<svg class="ic" style="left:1818.5px;top:577.3px;" width="13" height="13" viewBox="0 0 24 24" fill="none" stroke="#a06a3a" stroke-width="2.0" stroke-linecap="round" stroke-linejoin="round"><path d="M4 7l16 0"/><path d="M10 11l0 6"/><path d="M14 11l0 6"/><path d="M5 7l1 12a2 2 0 0 0 2 2h8a2 2 0 0 0 2 -2l1 -12"/><path d="M9 7v-3a1 1 0 0 1 1 -1h4a1 1 0 0 1 1 1v3"/></svg>
<span class="t " style="left:1538.60px;top:577.25px;font-size:14px;font-weight:400;color:#383c3c;-webkit-text-stroke:0.3px #383c3c;letter-spacing:0.105px;">$6,600.0</span>
<div class="b" style="left:311px;top:667.4px;width:1554px;height:1.3px;background:#7b7b7b;"></div>
<span class="t " style="left:335.50px;top:635.40px;font-size:14px;font-weight:400;color:#383c3c;-webkit-text-stroke:0.3px #383c3c;letter-spacing:-0.156px;">--</span>
<div class="b" style="left:1727px;top:626.75px;width:33px;height:31px;background:#2b6454;border-radius:3.5px;"></div>
<svg class="ic" style="left:1737px;top:635.75px;" width="13" height="13" viewBox="0 0 24 24" fill="none" stroke="#8fa8a0" stroke-width="2.3" stroke-linecap="round" stroke-linejoin="round"><path d="M4 20h4l10.5 -10.5a2.828 2.828 0 1 0 -4 -4l-10.5 10.5v4"/><path d="M13.5 6.5l4 4"/></svg>
<span class="t " style="left:1538.60px;top:635.70px;font-size:14px;font-weight:400;color:#383c3c;-webkit-text-stroke:0.3px #383c3c;letter-spacing:0.113px;">$0.0</span>
<div class="b" style="left:311px;top:733.4px;width:1554px;height:1.3px;background:#7b7b7b;"></div>
<div class="b" style="left:335px;top:681.2px;width:130px;height:41.6px;border:1px solid #1b5945;border-radius:6px;"></div>
<span class="t " style="left:400.00px;top:695.65px;font-size:14px;font-weight:400;color:#1a5744;-webkit-text-stroke:0.3px #1a5744;letter-spacing:0.028px;transform:translateX(-50%);">#VEND00001</span>
<div class="b" style="left:1727px;top:686.5px;width:33px;height:31px;background:#855724;border-radius:3.5px;"></div>
<svg class="ic" style="left:1736px;top:694.5px;" width="15" height="15" viewBox="0 0 24 24" fill="none" stroke="#8f8f8f" stroke-width="1.5" stroke-linecap="round" stroke-linejoin="round"><path d="M10 12a2 2 0 1 0 4 0a2 2 0 0 0 -4 0"/><path d="M21 12c-2.4 4 -5.4 6 -9 6c-3.6 0 -6.6 -2 -9 -6c2.4 -4 5.4 -6 9 -6c3.6 0 6.6 2 9 6"/></svg>
<div class="b" style="left:1768px;top:686.5px;width:32px;height:31px;background:#2b6454;border-radius:3.5px;"></div>
<svg class="ic" style="left:1777.5px;top:695.5px;" width="13" height="13" viewBox="0 0 24 24" fill="none" stroke="#8fa8a0" stroke-width="2.3" stroke-linecap="round" stroke-linejoin="round"><path d="M4 20h4l10.5 -10.5a2.828 2.828 0 1 0 -4 -4l-10.5 10.5v4"/><path d="M13.5 6.5l4 4"/></svg>
<div class="b" style="left:1809px;top:686.5px;width:32px;height:31px;background:#4d222e;border-radius:3.5px;"></div>
<svg class="ic" style="left:1818.5px;top:695.5px;" width="13" height="13" viewBox="0 0 24 24" fill="none" stroke="#a06a3a" stroke-width="2.0" stroke-linecap="round" stroke-linejoin="round"><path d="M4 7l16 0"/><path d="M10 11l0 6"/><path d="M14 11l0 6"/><path d="M5 7l1 12a2 2 0 0 0 2 2h8a2 2 0 0 0 2 -2l1 -12"/><path d="M9 7v-3a1 1 0 0 1 1 -1h4a1 1 0 0 1 1 1v3"/></svg>
<span class="t " style="left:1538.60px;top:695.45px;font-size:14px;font-weight:400;color:#383c3c;-webkit-text-stroke:0.3px #383c3c;letter-spacing:0.127px;">$469,200.0</span>
<span class="t " style="left:310.00px;top:782.15px;font-size:14px;font-weight:400;color:#43313a;-webkit-text-stroke:0.3px #43313a;letter-spacing:0.263px;">Showing 1 to 6 of 6 entries</span>
<div class="b" style="left:1747px;top:768px;width:118px;height:38px;border:1px solid #7c7c7c;border-radius:8px;background:#828282;"></div>
<svg class="ic" style="left:1761px;top:779px;" width="15" height="15" viewBox="0 0 24 24" fill="none" stroke="#2f3f3a" stroke-width="2.2" stroke-linecap="round" stroke-linejoin="round"><path d="M15 6l-6 6l6 6"/></svg>
<div class="b" style="left:1789px;top:768px;width:35px;height:38px;background:#22594a;"></div>
<span class="t " style="left:1803.00px;top:781.15px;font-size:14px;font-weight:400;color:#86ab9d;-webkit-text-stroke:0.3px #86ab9d;letter-spacing:0.219px;">1</span>
<svg class="ic" style="left:1836px;top:779px;" width="15" height="15" viewBox="0 0 24 24" fill="none" stroke="#2f3f3a" stroke-width="2.2" stroke-linecap="round" stroke-linejoin="round"><path d="M9 6l6 6l-6 6"/></svg>
</div>
<div id="modal">
<div class="b" style="left:561px;top:29px;width:798px;height:1100px;background:#fff;border-radius:15px 15px 0 0;"></div>
<span class="t sb m" style="left:586.00px;top:53.96px;font-size:16px;font-weight:400;color:#42101f;-webkit-text-stroke:0.51px #42101f;letter-spacing:0.620px;">Create New Vendor</span>
<svg class="ic" style="left:1313px;top:47px;" width="28" height="28" viewBox="0 0 24 24" fill="none" stroke="#7d7d7d" stroke-width="1.12" stroke-linecap="round" stroke-linejoin="round"><path d="M18 6l-12 12"/><path d="M6 6l12 12"/></svg>
<div class="b" style="left:561px;top:93px;width:798px;height:1px;background:#f4f6f5;"></div>
<span class="t sb m" style="left:581.40px;top:116.00px;font-size:15px;font-weight:400;color:#42101f;-webkit-text-stroke:0.48px #42101f;letter-spacing:0.423px;">Basic Info</span>
<div class="lab" style="left:581.4px;top:144.15px;"><span class="tl sb" style="font-weight:400;color:#30292d;-webkit-text-stroke:0.45px #30292d;letter-spacing:0.789px;">Name</span><span class="star" style="color:#8f8f8f;">*</span></div>
<div class="lab" style="left:842px;top:144.15px;"><span class="tl sb" style="font-weight:400;color:#30292d;-webkit-text-stroke:0.45px #30292d;letter-spacing:0.603px;">Contact</span><span class="star" style="color:#8f8f8f;">*</span></div>
<div class="lab" style="left:1102.4px;top:144.15px;"><span class="tl sb" style="font-weight:400;color:#30292d;-webkit-text-stroke:0.45px #30292d;letter-spacing:0.419px;">Email</span><span class="star" style="color:#8f8f8f;">*</span></div>
<div class="b" style="left:581px;top:169px;width:237px;height:41px;border:1px solid #c3d6cf;border-radius:6px;background:#fff;"></div><span class="t np" style="left:598.40px;top:182.95px;font-size:14px;font-weight:400;color:#868a89;letter-spacing:0.302px;">Enter Name</span>
<div class="b" style="left:842px;top:169px;width:236px;height:41px;border:1px solid #c3d6cf;border-radius:6px;background:#fff;"></div><span class="t np" style="left:859.40px;top:182.95px;font-size:14px;font-weight:400;color:#868a89;letter-spacing:0.251px;">Enter Contact</span>
<div class="b" style="left:1102px;top:169px;width:237px;height:41px;border:1px solid #c3d6cf;border-radius:6px;background:#fff;"></div><span class="t np" style="left:1119.40px;top:182.95px;font-size:14px;font-weight:400;color:#868a89;letter-spacing:0.165px;">Enter Email</span>
<div class="lab" style="left:581.4px;top:235.15px;"><span class="tl sb" style="font-weight:400;color:#30292d;-webkit-text-stroke:0.45px #30292d;letter-spacing:0.451px;">Password</span><span class="star" style="color:#8f8f8f;">*</span></div>
<div class="lab" style="left:841.4px;top:235.15px;"><span class="tl sb" style="font-weight:400;color:#30292d;-webkit-text-stroke:0.45px #30292d;letter-spacing:0.795px;">Tax Number</span></div>
<div class="b" style="left:581px;top:260px;width:237px;height:41px;border:1px solid #c3d6cf;border-radius:6px;background:#fff;"></div><span class="t np" style="left:598.40px;top:273.95px;font-size:14px;font-weight:400;color:#868a89;letter-spacing:0.204px;">Enter Password</span>
<div class="b" style="left:842px;top:260px;width:236px;height:41px;border:1px solid #c3d6cf;border-radius:6px;background:#fff;"></div><span class="t np" style="left:859.40px;top:273.95px;font-size:14px;font-weight:400;color:#868a89;letter-spacing:0.419px;">Enter Tax Number</span>
<div class="lab" style="left:581.4px;top:326.15px;"><span class="tl sb" style="font-weight:400;color:#30292d;-webkit-text-stroke:0.45px #30292d;letter-spacing:0.419px;">Email</span><span class="star" style="color:#8f8f8f;">*</span></div>
<div class="b" style="left:581px;top:351px;width:758px;height:42px;border:1px solid #339d6d;border-radius:6px;background:#fff;box-shadow:0 0 0 3px #ccddd6;"></div>
<span class="t sb m" style="left:581.40px;top:416.00px;font-size:15px;font-weight:400;color:#42101f;-webkit-text-stroke:0.48px #42101f;letter-spacing:0.552px;">Billing Address</span>
<div class="lab" style="left:581.4px;top:444.15px;"><span class="tl sb" style="font-weight:400;color:#30292d;-webkit-text-stroke:0.45px #30292d;letter-spacing:0.789px;">Name</span><span class="star" style="color:#8f8f8f;">*</span></div>
<div class="lab" style="left:972.4px;top:444.15px;"><span class="tl sb" style="font-weight:400;color:#30292d;-webkit-text-stroke:0.45px #30292d;letter-spacing:0.506px;">Phone</span><span class="star" style="color:#8f8f8f;">*</span></div>
<div class="b" style="left:581px;top:469px;width:367px;height:41px;border:1px solid #c3d6cf;border-radius:6px;background:#fff;"></div><span class="t np" style="left:598.40px;top:482.95px;font-size:14px;font-weight:400;color:#868a89;letter-spacing:0.302px;">Enter Name</span>
<div class="b" style="left:972px;top:469px;width:367px;height:41px;border:1px solid #c3d6cf;border-radius:6px;background:#fff;"></div><span class="t np" style="left:989.40px;top:482.95px;font-size:14px;font-weight:400;color:#868a89;letter-spacing:0.237px;">Enter Phone</span>
<div class="lab" style="left:580.6px;top:535.15px;"><span class="tl sb" style="font-weight:400;color:#30292d;-webkit-text-stroke:0.45px #30292d;letter-spacing:0.440px;">Address</span><span class="star" style="color:#8f8f8f;">*</span></div>
<div class="b" style="left:581px;top:560px;width:758px;height:83px;border:1px solid #c3d6cf;border-radius:6px;background:#fff;"></div><span class="t np" style="left:598.40px;top:574.15px;font-size:14px;font-weight:400;color:#868a89;letter-spacing:0.274px;">Enter Address</span>
<svg class="ic" style="left:1327px;top:631px" width="10" height="10" viewBox="0 0 10 10" stroke="#777" stroke-width="1"><path d="M9 2L2 9M9 6L6 9"/></svg>
<div class="lab" style="left:581.2px;top:668.15px;"><span class="tl sb" style="font-weight:400;color:#30292d;-webkit-text-stroke:0.45px #30292d;letter-spacing:0.422px;">City</span><span class="star" style="color:#8f8f8f;">*</span></div>
<div class="lab" style="left:972px;top:668.15px;"><span class="tl sb" style="font-weight:400;color:#30292d;-webkit-text-stroke:0.45px #30292d;letter-spacing:0.453px;">State</span><span class="star" style="color:#8f8f8f;">*</span></div>
<div class="b" style="left:581px;top:693px;width:367px;height:41px;border:1px solid #c3d6cf;border-radius:6px;background:#fff;"></div><span class="t np" style="left:598.40px;top:706.95px;font-size:14px;font-weight:400;color:#868a89;letter-spacing:0.147px;">Enter City</span>
<div class="b" style="left:972px;top:693px;width:367px;height:41px;border:1px solid #c3d6cf;border-radius:6px;background:#fff;"></div><span class="t np" style="left:989.40px;top:706.95px;font-size:14px;font-weight:400;color:#868a89;letter-spacing:0.166px;">Enter State</span>
<div class="lab" style="left:581.2px;top:759.15px;"><span class="tl sb" style="font-weight:400;color:#30292d;-webkit-text-stroke:0.45px #30292d;letter-spacing:0.750px;">Country</span><span class="star" style="color:#8f8f8f;">*</span></div>
<div class="lab" style="left:971.7px;top:759.15px;"><span class="tl sb" style="font-weight:400;color:#30292d;-webkit-text-stroke:0.45px #30292d;letter-spacing:0.213px;">Zip Code</span><span class="star" style="color:#8f8f8f;">*</span></div>
<div class="b" style="left:581px;top:784px;width:367px;height:41px;border:1px solid #c3d6cf;border-radius:6px;background:#fff;"></div><span class="t np" style="left:598.40px;top:797.95px;font-size:14px;font-weight:400;color:#868a89;letter-spacing:0.334px;">Enter Country</span>
<div class="b" style="left:972px;top:784px;width:367px;height:41px;border:1px solid #c3d6cf;border-radius:6px;background:#fff;"></div><span class="t np" style="left:989.40px;top:797.95px;font-size:14px;font-weight:400;color:#868a89;letter-spacing:0.131px;">Enter Zip Code</span>
<div class="b" style="left:1307px;top:846px;width:32px;height:31px;background:#339d6d;border-radius:3.5px;"></div>
<svg class="ic" style="left:1316px;top:855px;" width="13" height="13" viewBox="0 0 24 24" fill="none" stroke="#fff" stroke-width="2.0" stroke-linecap="round" stroke-linejoin="round"><path d="M7 7m0 2.667a2.667 2.667 0 0 1 2.667 -2.667h8.666a2.667 2.667 0 0 1 2.667 2.667v8.666a2.667 2.667 0 0 1 -2.667 2.667h-8.666a2.667 2.667 0 0 1 -2.667 -2.667z"/><path d="M4.012 16.737a2.005 2.005 0 0 1 -1.012 -1.737v-10c0 -1.1 .9 -2 2 -2h10c.75 0 1.158 .385 1.5 1"/></svg>
<span class="t sb m" style="left:581.20px;top:879.00px;font-size:15px;font-weight:400;color:#42101f;-webkit-text-stroke:0.48px #42101f;letter-spacing:0.508px;">Shipping Address</span>
<div class="lab" style="left:581.4px;top:907.15px;"><span class="tl sb" style="font-weight:400;color:#30292d;-webkit-text-stroke:0.45px #30292d;letter-spacing:0.789px;">Name</span></div>
<div class="lab" style="left:972.4px;top:907.15px;"><span class="tl sb" style="font-weight:400;color:#30292d;-webkit-text-stroke:0.45px #30292d;letter-spacing:0.506px;">Phone</span></div>
<div class="b" style="left:581px;top:932px;width:367px;height:41px;border:1px solid #c3d6cf;border-radius:6px;background:#fff;"></div><span class="t np" style="left:598.40px;top:945.95px;font-size:14px;font-weight:400;color:#868a89;letter-spacing:0.302px;">Enter Name</span>
<div class="b" style="left:972px;top:932px;width:367px;height:41px;border:1px solid #c3d6cf;border-radius:6px;background:#fff;"></div><span class="t np" style="left:989.40px;top:945.95px;font-size:14px;font-weight:400;color:#868a89;letter-spacing:0.237px;">Enter Phone</span>
<div class="lab" style="left:580.6px;top:998.15px;"><span class="tl sb" style="font-weight:400;color:#30292d;-webkit-text-stroke:0.45px #30292d;letter-spacing:0.440px;">Address</span></div>
<div class="b" style="left:581px;top:1023px;width:758px;height:83px;border:1px solid #c3d6cf;border-radius:6px;background:#fff;"></div><span class="t np" style="left:598.40px;top:1037.75px;font-size:14px;font-weight:400;color:#868a89;letter-spacing:0.274px;">Enter Address</span>
</div>
</body></html>
